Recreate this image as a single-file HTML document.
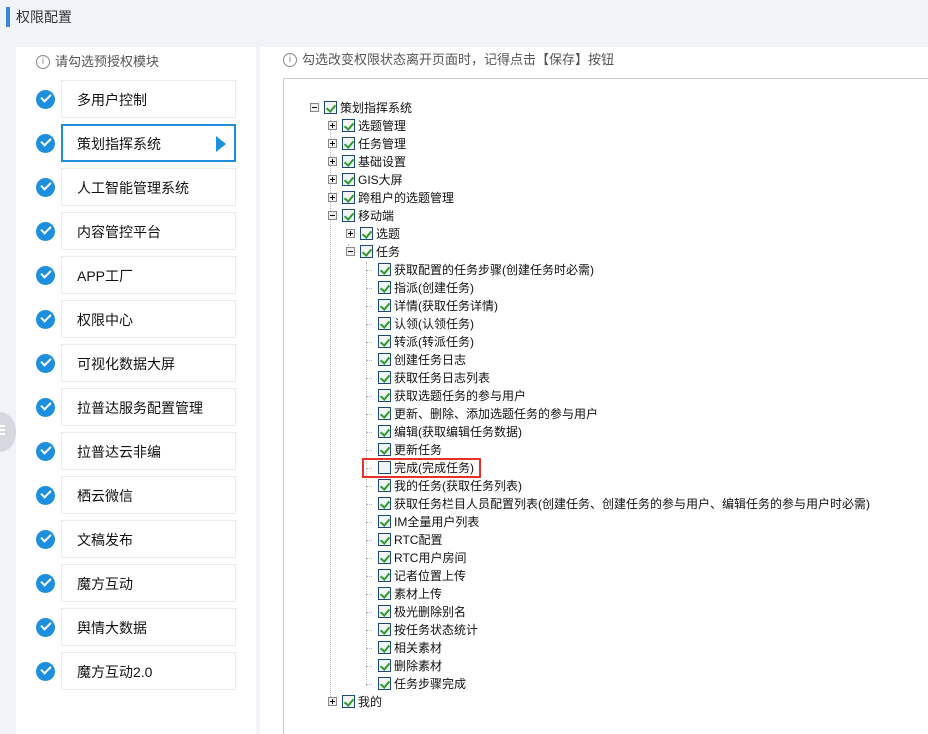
<!DOCTYPE html>
<html><head><meta charset="utf-8"><style>
*{margin:0;padding:0;box-sizing:border-box}
html,body{width:928px;height:734px;overflow:hidden}
body{background:#f0f3f7;font-family:"Liberation Sans","Noto Sans CJK SC",sans-serif;position:relative;color:#222}
.a{position:absolute}
.item{position:absolute;left:61px;width:175px;height:38px;border:1px solid #ececec;background:#fff;font-size:14px;line-height:38px;padding-left:15px;color:#111}
.ci{position:absolute;left:36px;width:19px;height:19px;border-radius:50%;background:#1e8fdc}
.ci:after{content:"";position:absolute;left:5px;top:4px;width:8px;height:4px;border-left:2.5px solid #fff;border-bottom:2.5px solid #fff;transform:rotate(-45deg)}
.row{position:absolute;height:18px;font-size:12px;line-height:18px;white-space:nowrap;color:#111}
.cb{position:absolute;width:13px;height:13px;border:1px solid #1c4a78;background:#f4f4f4;top:2px}
.cb.on:after{content:"";position:absolute;left:3px;top:1px;width:4px;height:7px;border-right:2px solid #2a9d2a;border-bottom:2px solid #2a9d2a;transform:rotate(40deg)}
.tg{position:absolute;width:9px;height:9px;border:1px solid #888;background:#f0f0f0;top:4px}
.tg:before{content:"";position:absolute;left:1px;top:3px;width:5px;height:1px;background:#000}
.tg.p:after{content:"";position:absolute;left:3px;top:1px;width:1px;height:5px;background:#000}
.vl{position:absolute;border-left:1px dotted #bbb;width:0}
.hl{position:absolute;border-top:1px dotted #bbb;height:0;width:6px}
</style></head><body>
<div class="a" style="left:6px;top:7px;width:4px;height:20px;background:#3a86e0"></div>
<div class="a" style="left:16px;top:7px;font-size:14px;line-height:20px;color:#333">权限配置</div>
<div class="a" style="left:16px;top:47px;width:240px;height:687px;background:#fff"></div>
<div class="a" style="left:260px;top:47px;width:668px;height:687px;background:#fff"></div>
<div class="a" style="left:36px;top:55px;width:14px;height:14px;border:1px solid #888;border-radius:50%;font-size:10px;line-height:12px;text-align:center;color:#888">i</div>
<div class="a" style="left:55px;top:53px;font-size:13px;line-height:18px;color:#555">请勾选预授权模块</div>
<div class="a" style="left:283px;top:53px;width:14px;height:14px;border:1px solid #888;border-radius:50%;font-size:10px;line-height:12px;text-align:center;color:#888">i</div>
<div class="a" style="left:302px;top:51px;font-size:13px;line-height:18px;color:#555">勾选改变权限状态离开页面时，记得点击【保存】按钮</div>
<div class="a" style="left:283px;top:78px;width:660px;height:680px;border:1px solid #ccc;background:#fff"></div>
<div id="L"></div><div id="T"></div>
<div class="a" style="left:-16px;top:412px;width:32px;height:40px;border-radius:50%;background:#d5d9df"></div>
<div class="a" style="left:0;top:425px;width:5px;height:2px;background:#fff;box-shadow:0 4px #fff,0 8px #fff"></div>
<script>
var L=["多用户控制","策划指挥系统","人工智能管理系统","内容管控平台","APP工厂","权限中心","可视化数据大屏","拉普达服务配置管理","拉普达云非编","栖云微信","文稿发布","魔方互动","舆情大数据","魔方互动2.0"];
var h="";
L.forEach(function(t,i){var y=80+i*44;
h+='<div class="ci" style="top:'+(y+10)+'px"></div>';
var s=i==1?'border:2px solid #1e8fdc;line-height:36px;padding-left:14px':'';
h+='<div class="item" style="top:'+y+'px;'+s+'">'+t+(i==1?'<span style="position:absolute;right:8px;top:10px;width:0;height:0;border-left:10px solid #1e8fdc;border-top:8px solid transparent;border-bottom:8px solid transparent"></span>':'')+'</div>';});
document.getElementById("L").innerHTML=h;
var T=[[0,"策划指挥系统","m"],[1,"选题管理","p"],[1,"任务管理","p"],[1,"基础设置","p"],[1,"GIS大屏","p"],[1,"跨租户的选题管理","p"],[1,"移动端","m"],[2,"选题","p"],[2,"任务","m"]];
["获取配置的任务步骤(创建任务时必需)","指派(创建任务)","详情(获取任务详情)","认领(认领任务)","转派(转派任务)","创建任务日志","获取任务日志列表","获取选题任务的参与用户","更新、删除、添加选题任务的参与用户","编辑(获取编辑任务数据)","更新任务","完成(完成任务)","我的任务(获取任务列表)","获取任务栏目人员配置列表(创建任务、创建任务的参与用户、编辑任务的参与用户时必需)","IM全量用户列表","RTC配置","RTC用户房间","记者位置上传","素材上传","极光删除别名","按任务状态统计","相关素材","删除素材","任务步骤完成"].forEach(function(t){T.push([3,t,""])});
T.push([1,"我的","p"]);
h='<div class="vl" style="left:330px;top:118px;height:585px"></div><div class="vl" style="left:348px;top:244px;height:10px"></div><div class="vl" style="left:366px;top:262px;height:424px"></div>';
T.forEach(function(r,i){var y=99+i*18,l=r[0],cx=324+18*l;
if(r[2])h+='<div class="row" style="top:'+y+'px;left:'+(cx-14)+'px;width:10px"><div class="tg '+(r[2]=="p"?"p":"")+'"></div></div>';
else h+='<div class="hl" style="left:'+(cx-12)+'px;top:'+(y+9)+'px"></div>';
h+='<div class="row" style="top:'+y+'px;left:'+cx+'px"><div class="cb '+(r[1]=="完成(完成任务)"?"":"on")+'"></div><span style="margin-left:16px">'+r[1]+'</span></div>';
if(r[1]=="完成(完成任务)")h+='<div class="a" style="left:362px;top:'+(y-1)+'px;width:119px;height:20px;border:2px solid #e8302a"></div>';
});
document.getElementById("T").innerHTML=h;
</script>
</body></html>
